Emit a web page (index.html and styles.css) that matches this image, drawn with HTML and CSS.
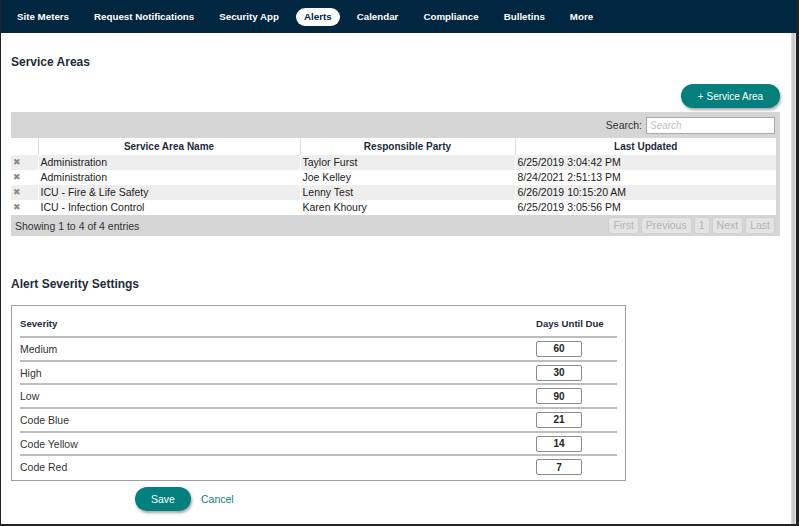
FILE: index.html
```html
<!DOCTYPE html>
<html>
<head>
  <meta charset="utf-8">
  <title>Alerts - Service Areas</title>
  <link rel="stylesheet" href="styles.css">
</head>
<body>
  <div class="frame">
    <nav class="topnav">
      <a class="nav-item">Site Meters</a>
      <a class="nav-item">Request Notifications</a>
      <a class="nav-item">Security App</a>
      <a class="nav-item active">Alerts</a>
      <a class="nav-item">Calendar</a>
      <a class="nav-item">Compliance</a>
      <a class="nav-item">Bulletins</a>
      <a class="nav-item">More</a>
    </nav>

    <div class="page">
      <div class="content">
        <h2 class="section-title">Service Areas</h2>

        <div class="actions">
          <button class="btn-teal add-btn">+ Service Area</button>
        </div>

        <div class="grid-wrap">
          <div class="grid-toolbar">
            <label for="search">Search:</label>
            <input type="text" id="search" placeholder="Search" />
          </div>

          <table class="grid">
            <colgroup>
              <col style="width: 27px">
              <col style="width: 262px">
              <col style="width: 215px">
              <col style="width: 261px">
            </colgroup>
            <thead>
              <tr>
                <th></th>
                <th>Service Area Name</th>
                <th>Responsible Party</th>
                <th>Last Updated</th>
              </tr>
            </thead>
            <tbody>
              <tr>
                <td class="del">✖</td>
                <td>Administration</td>
                <td>Taylor Furst</td>
                <td>6/25/2019 3:04:42 PM</td>
              </tr>
              <tr>
                <td class="del">✖</td>
                <td>Administration</td>
                <td>Joe Kelley</td>
                <td>8/24/2021 2:51:13 PM</td>
              </tr>
              <tr>
                <td class="del">✖</td>
                <td>ICU - Fire &amp; Life Safety</td>
                <td>Lenny Test</td>
                <td>6/26/2019 10:15:20 AM</td>
              </tr>
              <tr>
                <td class="del">✖</td>
                <td>ICU - Infection Control</td>
                <td>Karen Khoury</td>
                <td>6/25/2019 3:05:56 PM</td>
              </tr>
            </tbody>
          </table>

          <div class="grid-footer">
            <span>Showing 1 to 4 of 4 entries</span>
            <div class="pager">
              <span class="page-btn">First</span>
              <span class="page-btn">Previous</span>
              <span class="page-btn">1</span>
              <span class="page-btn">Next</span>
              <span class="page-btn">Last</span>
            </div>
          </div>
        </div>

        <h2 class="section-title severity-title">Alert Severity Settings</h2>

        <div class="severity-box">
          <table class="severity">
            <thead>
              <tr>
                <th>Severity</th>
                <th class="days-col">Days Until Due</th>
              </tr>
            </thead>
            <tbody>
              <tr><td>Medium</td><td class="days-col"><input class="days" type="text" value="60" /></td></tr>
              <tr><td>High</td><td class="days-col"><input class="days" type="text" value="30" /></td></tr>
              <tr><td>Low</td><td class="days-col"><input class="days" type="text" value="90" /></td></tr>
              <tr><td>Code Blue</td><td class="days-col"><input class="days" type="text" value="21" /></td></tr>
              <tr><td>Code Yellow</td><td class="days-col"><input class="days" type="text" value="14" /></td></tr>
              <tr><td>Code Red</td><td class="days-col"><input class="days" type="text" value="7" /></td></tr>
            </tbody>
          </table>
        </div>

        <div class="form-actions">
          <button class="btn-teal save-btn">Save</button>
          <a class="cancel">Cancel</a>
        </div>
      </div>
      <div class="scrollbar"></div>
    </div>
  </div>
</body>
</html>
```

FILE: styles.css
```css
body {
  font-family: 'Liberation Sans', Arial, sans-serif;
  margin: 0;
  background: white;
  color: #222;
}

.frame {
  width: 799px;
  height: 526px;
  box-sizing: border-box;
  border-left: 1px solid #222;
  border-right: 3px solid #222;
  border-bottom: 2px solid #222;
  display: flex;
  flex-direction: column;
  overflow: hidden;
}

.topnav {
  background: #01263f;
  height: 33px;
  display: flex;
  align-items: center;
  gap: 9px;
  padding-left: 8px;
  flex-shrink: 0;
}

.nav-item {
  color: white;
  font-size: 9.75px;
  font-weight: bold;
  padding: 0 8px;
  height: 18px;
  line-height: 18px;
  border-radius: 10px;
  white-space: nowrap;
}

.nav-item.active {
  background: white;
  color: #01263f;
}

.page {
  flex: 1;
  display: flex;
}

.content {
  flex: 1;
  padding: 0 11px 0 10px;
}

.scrollbar {
  width: 5px;
  background: linear-gradient(to right, #e4e4e4, #c6c6c6 50%, #e8e8e8);
}

.section-title {
  margin: 22px 0 0 0;
  font-size: 12px;
  line-height: 14px;
  font-weight: bold;
  color: #1d2b3a;
}

.btn-teal {
  background: #03807d;
  color: white;
  border: none;
  border-radius: 12px;
  height: 24px;
  font-family: inherit;
  font-size: 10.5px;
  box-shadow: 1px 2px 3px rgba(0, 0, 0, 0.35);
  cursor: pointer;
}

.actions {
  margin-top: 15px;
  display: flex;
  justify-content: flex-end;
}

.add-btn {
  width: 99px;
  font-size: 10px;
}

.grid-wrap {
  margin-top: 4px;
  background: #d6d6d6;
}

.grid-toolbar {
  height: 26px;
  display: flex;
  align-items: center;
  justify-content: flex-end;
  gap: 4px;
  padding-right: 5px;
  font-size: 10.5px;
  color: #333;
}

.grid-toolbar input {
  width: 129px;
  height: 17px;
  box-sizing: border-box;
  border: 1px solid #a9a9a9;
  font-family: inherit;
  font-size: 10px;
  padding: 0 3px;
}

.grid-toolbar input::placeholder {
  color: #c2c2c2;
  font-style: italic;
}

.grid {
  width: 765px;
  table-layout: fixed;
  border-collapse: collapse;
  font-size: 10.5px;
}

.grid th {
  background: white;
  height: 17px;
  padding: 0;
  font-size: 10px;
  font-weight: bold;
  color: #1d2b3a;
  text-align: center;
  border-left: 1px solid #dcdcdc;
}

.grid td {
  height: 15px;
  padding: 0 2px;
  border-left: 1px solid white;
  white-space: nowrap;
  line-height: 15px;
}

.grid th:first-child,
.grid td:first-child {
  border-left: none;
}

.grid tbody tr {
  background: white;
}

.grid tbody tr:nth-child(odd) {
  background: #eeeeee;
}

.grid td.del {
  font-family: 'DejaVu Sans', sans-serif;
  font-size: 9px;
  color: #8a8a8a;
}

.grid-footer {
  height: 21px;
  display: flex;
  align-items: center;
  justify-content: space-between;
  padding: 0 5px 0 4px;
  font-size: 10.5px;
  color: #333;
}

.pager {
  display: flex;
  gap: 2px;
}

.page-btn {
  height: 17px;
  line-height: 15px;
  box-sizing: border-box;
  padding: 0 4px;
  border: 1px solid #d0d0d0;
  border-radius: 3px;
  background: #e4e4e4;
  color: #b3b3b3;
}

.severity-title {
  margin-top: 41px;
}

.severity-box {
  margin-top: 14px;
  width: 615px;
  box-sizing: border-box;
  border: 1px solid #a0a0a0;
  padding: 5px 8px 2px 8px;
}

.severity {
  width: 100%;
  border-collapse: collapse;
  font-size: 10.5px;
}

.severity th {
  height: 25px;
  padding: 0;
  text-align: left;
  font-size: 9.6px;
  font-weight: bold;
  color: #1d2b3a;
  border-bottom: 2px solid #bdbdbd;
}

.severity td {
  height: 21.7px;
  padding: 0;
  border-bottom: 2px solid #bdbdbd;
  color: #333;
}

.severity tbody tr:last-child td {
  border-bottom: none;
}

.severity .days-col {
  width: 81px;
}

.days {
  width: 46px;
  height: 16px;
  box-sizing: border-box;
  border: 1px solid #8a8a8a;
  border-radius: 2px;
  text-align: center;
  font-family: inherit;
  font-size: 10px;
  font-weight: bold;
  color: #222;
  padding: 0;
  display: block;
}

.form-actions {
  margin-top: 6px;
  margin-left: 124px;
  display: flex;
  align-items: center;
  gap: 10px;
}

.save-btn {
  width: 56px;
}

.cancel {
  color: #12807e;
  font-size: 10.5px;
  cursor: pointer;
}
```
